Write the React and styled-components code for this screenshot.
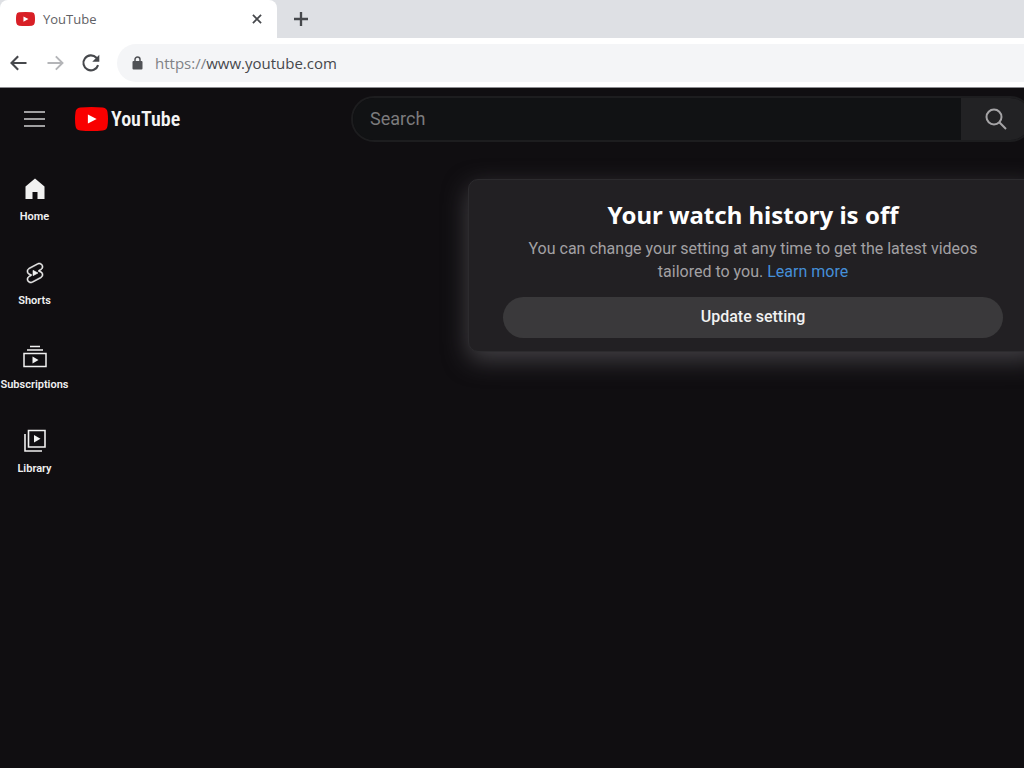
import React from "react";
import styled, { createGlobalStyle } from "styled-components";

const GlobalStyle = createGlobalStyle`
  * { box-sizing: border-box; }
  body { margin: 0; background: #100e11; overflow-x: hidden; }
  button, input { font: inherit; }
`;

const Page = styled.div`
  min-height: 100vh;
  overflow: hidden;
  background: #100e11;
  color: #fff;
  font-family: Roboto, "Liberation Sans", sans-serif;
`;

const TabStrip = styled.div`
  display: flex;
  align-items: stretch;
  height: 38px;
  background: #dee0e4;
  color: #5f6165;
`;

const Tab = styled.div`
  display: flex;
  align-items: center;
  gap: 8px;
  width: 277px;
  padding: 0 13px 0 16px;
  border-radius: 8px 8px 0 0;
  background: #fff;
  font: 13px/20px "Open Sans", "Noto Sans", sans-serif;
`;

const TabTitle = styled.span`
  flex: 1;
`;

const PlainButton = styled.button`
  display: flex;
  align-items: center;
  justify-content: center;
  padding: 0;
  border: 0;
  background: none;
  color: ${(p) => p.$color || "#46484c"};
  cursor: pointer;
`;

const NewTabButton = styled(PlainButton)`
  width: 48px;
`;

const Toolbar = styled.div`
  display: flex;
  align-items: center;
  gap: 16px;
  height: 50px;
  padding-left: 9px;
  background: #fff;
  border-bottom: 1px solid #8c8c90;
`;

const AddressBar = styled.div`
  display: flex;
  align-items: center;
  gap: 12px;
  flex: 1;
  height: 38px;
  margin-right: -20px;
  padding-left: 15px;
  border-radius: 19px;
  background: #f4f5f7;
  color: #505256;
`;

const AddressText = styled.a`
  color: #46484c;
  font: 15px/22px "Open Sans", "Noto Sans", sans-serif;
  text-decoration: none;
`;

const Scheme = styled.span`
  color: #808286;
`;

const Masthead = styled.header`
  display: flex;
  align-items: center;
  height: 62px;
  padding-left: 24px;
`;

const LogoLink = styled.a`
  display: flex;
  align-items: center;
  gap: 3px;
  margin-left: 30px;
  color: #f4f4f4;
  font: 600 20px/28px "Roboto Condensed", "Liberation Sans Narrow", sans-serif;
  text-decoration: none;
`;

const SearchForm = styled.form`
  display: flex;
  flex: 1;
  height: 46px;
  margin: 0 -9px 0 auto;
  max-width: 682px;
  border: 2px solid #1d1d1f;
  border-radius: 23px;
  overflow: hidden;
`;

const SearchInput = styled.input`
  flex: 1;
  min-width: 0;
  padding: 0 17px 2px;
  border: 0;
  outline: 0;
  background: #111214;
  color: #fff;
  font-size: 18px;
  &::placeholder { color: #7c7b7d; opacity: 1; }
`;

const SearchButton = styled(PlainButton)`
  width: 70px;
  background: #222224;
`;

const Body = styled.div`
  display: flex;
  align-items: flex-start;
  justify-content: space-between;
`;

const Sidebar = styled.nav`
  display: flex;
  flex-direction: column;
  width: 69px;
  padding-top: 8px;
`;

const SideItem = styled.a`
  display: flex;
  flex-direction: column;
  align-items: center;
  justify-content: center;
  gap: 9px;
  height: 84px;
  color: #f1f1f1;
  font-size: 11px;
  font-weight: 600;
  line-height: 14px;
  text-decoration: none;
`;

const Card = styled.section`
  width: 570px;
  flex-shrink: 0;
  margin: 29px -14px 0 0;
  padding: 18px 34px 13px;
  border: 1px solid #2c2b2e;
  border-radius: 10px;
  background: #222023;
  box-shadow: 0 8px 24px #434145;
  text-align: center;
`;

const CardTitle = styled.h1`
  margin: 0;
  font: bold 24px/34px "Noto Sans", "Open Sans", sans-serif;
`;

const CardText = styled.p`
  margin: 5px 24px 14px;
  color: #a3a1a4;
  font-size: 16px;
  line-height: 23px;
`;

const LearnLink = styled.a`
  color: #458fd8;
  text-decoration: none;
`;

const UpdateButton = styled.button`
  display: block;
  width: 100%;
  height: 41px;
  padding: 0 0 2px;
  border: 0;
  border-radius: 21px;
  background: #3a393b;
  color: #f1f1f1;
  font-size: 16px;
  font-weight: 500;
  cursor: pointer;
`;

const Play = ({ width, height, color }) => (
  <svg width={width} height={height} viewBox="0 0 32 24" preserveAspectRatio="none" aria-hidden="true">
    <path d="M5 .5Q16-.5 27 .5Q31 1 31.500 5Q32.500 12 31.500 19Q31 23 27 23.500Q16 24.500 5 23.500Q1 23 .5 19Q-.5 12 .5 5Q1 1 5 .5Z" fill={color} />
    <path d="M12.500 7.500V16.500L21 12Z" fill="#fff" />
  </svg>
);

const Line = ({ size = 24, width = 2, children }) => (
  <svg width={size} height={size} viewBox="0 0 24 24" fill="none" stroke="currentColor" strokeWidth={width} aria-hidden="true">
    {children}
  </svg>
);

const HomeIcon = () => (
  <Line width={0}>
    <path d="M12 1.500L2.500 9.500V22H9.500V15H14.500V22H21.500V9.500Z" fill="currentColor" />
  </Line>
);

const ShortsIcon = () => (
  <Line width={0}>
    <path
      d="M10 14.650v-5.300L15 12l-5 2.650zm7.770-4.330-1.200-.5L18 9.060c1.840-.96 2.530-3.230 1.560-5.060s-3.240-2.530-5.070-1.560L6 6.940c-1.290.68-2.070 2.040-2 3.490.07 1.420.93 2.670 2.220 3.250.03.010 1.200.5 1.200.5L6 14.930c-1.830.97-2.530 3.240-1.560 5.070.97 1.830 3.240 2.530 5.070 1.560l8.500-4.500c1.290-.68 2.060-2.040 1.990-3.490-.07-1.420-.94-2.680-2.230-3.250zm-.23 5.860-8.500 4.500c-1.340.71-3.010.2-3.720-1.140-.71-1.340-.2-3.010 1.140-3.720l2.040-1.080v-1.210l-.69-.28-1.110-.46c-.99-.41-1.650-1.350-1.700-2.410-.05-1.060.52-2.060 1.460-2.560l8.500-4.500c1.340-.71 3.010-.2 3.720 1.140.71 1.340.2 3.010-1.140 3.720L15.500 9.260v1.210l1.800.74c.99.41 1.650 1.350 1.700 2.410.05 1.060-.52 2.060-1.460 2.560z"
      fill="currentColor"
      stroke="currentColor"
      strokeWidth=".6"
    />
  </Line>
);

const SubscriptionsIcon = () => (
  <Line width={1.5}>
    <path d="M7 1.500H17M4 5H20M1 8.500H23V21.500H1Z" />
    <path d="M9.500 11.500V18.500L15.500 15Z" fill="currentColor" stroke="none" />
  </Line>
);

const LibraryIcon = () => (
  <Line width={1.6}>
    <path d="M5.500 1.500H22V18H5.500ZM2 5V22H19" />
    <path d="M11 6V13.500L17.500 9.750Z" fill="currentColor" stroke="none" />
  </Line>
);

const items = [
  ["Home", HomeIcon],
  ["Shorts", ShortsIcon],
  ["Subscriptions", SubscriptionsIcon],
  ["Library", LibraryIcon],
];

export default function App() {
  return (
    <Page>
      <GlobalStyle />
      <TabStrip>
        <Tab>
          <Play width={19} height={14} color="#d81f26" />
          <TabTitle>YouTube</TabTitle>
          <PlainButton aria-label="Close tab">
            <Line size={14}><path d="M5 5L19 19M19 5L5 19" strokeWidth="3" /></Line>
          </PlainButton>
        </Tab>
        <NewTabButton aria-label="New tab">
          <Line size={14}><path d="M12 0V24M0 12H24" strokeWidth="4" /></Line>
        </NewTabButton>
      </TabStrip>
      <Toolbar>
        <PlainButton aria-label="Back">
          <Line size={20}><path d="M21 12H3M11 4L3 12L11 20" strokeWidth="2.500" /></Line>
        </PlainButton>
        <PlainButton aria-label="Forward" $color="#b4b5b8">
          <Line size={20}><path d="M3 12H21M13 4L21 12L13 20" strokeWidth="2.300" /></Line>
        </PlainButton>
        <PlainButton aria-label="Reload">
          <Line size={20}>
            <path d="M20.500 14.500A9 9 0 1 1 18.500 5.700L20 7.500" strokeWidth="2.500" />
            <path d="M22 2V10.500H13.500Z" fill="currentColor" stroke="none" />
          </Line>
        </PlainButton>
        <AddressBar>
          <svg width="11" height="14" viewBox="0 0 11 14" aria-hidden="true">
            <path d="M3 6V3.500a2.500 2.500 0 0 1 5 0V6" fill="none" stroke="currentColor" strokeWidth="1.500" />
            <rect x="0.500" y="5" width="10" height="8.500" rx="1" fill="currentColor" />
          </svg>
          <AddressText href="#"><Scheme>https://</Scheme>www.youtube.com</AddressText>
        </AddressBar>
      </Toolbar>
      <Masthead>
        <PlainButton aria-label="Menu" $color="#a09fa1">
          <svg width="21" height="18" viewBox="0 0 21 18" stroke="currentColor" strokeWidth="2" aria-hidden="true">
            <path d="M0 2H21M0 9H21M0 16H21" />
          </svg>
        </PlainButton>
        <LogoLink href="#">
          <Play width={33} height={24} color="#f90000" />
          <span>YouTube</span>
        </LogoLink>
        <SearchForm onSubmit={(e) => e.preventDefault()}>
          <SearchInput aria-label="Search" placeholder="Search" />
          <SearchButton aria-label="Submit search" $color="#a5a4a6">
            <svg width="22" height="22" viewBox="0 0 22 22" fill="none" stroke="currentColor" strokeWidth="2" aria-hidden="true">
              <circle cx="9" cy="9" r="7.500" />
              <path d="M14.300 14.300L21 21" />
            </svg>
          </SearchButton>
        </SearchForm>
      </Masthead>
      <Body>
        <Sidebar>
          {items.map(([label, Icon]) => (
            <SideItem href="#" key={label}>
              <Icon />
              <span>{label}</span>
            </SideItem>
          ))}
        </Sidebar>
        <Card>
          <CardTitle>Your watch history is off</CardTitle>
          <CardText>
            You can change your setting at any time to get the latest videos tailored to you.{" "}
            <LearnLink href="#">Learn more</LearnLink>
          </CardText>
          <UpdateButton>Update setting</UpdateButton>
        </Card>
      </Body>
    </Page>
  );
}
